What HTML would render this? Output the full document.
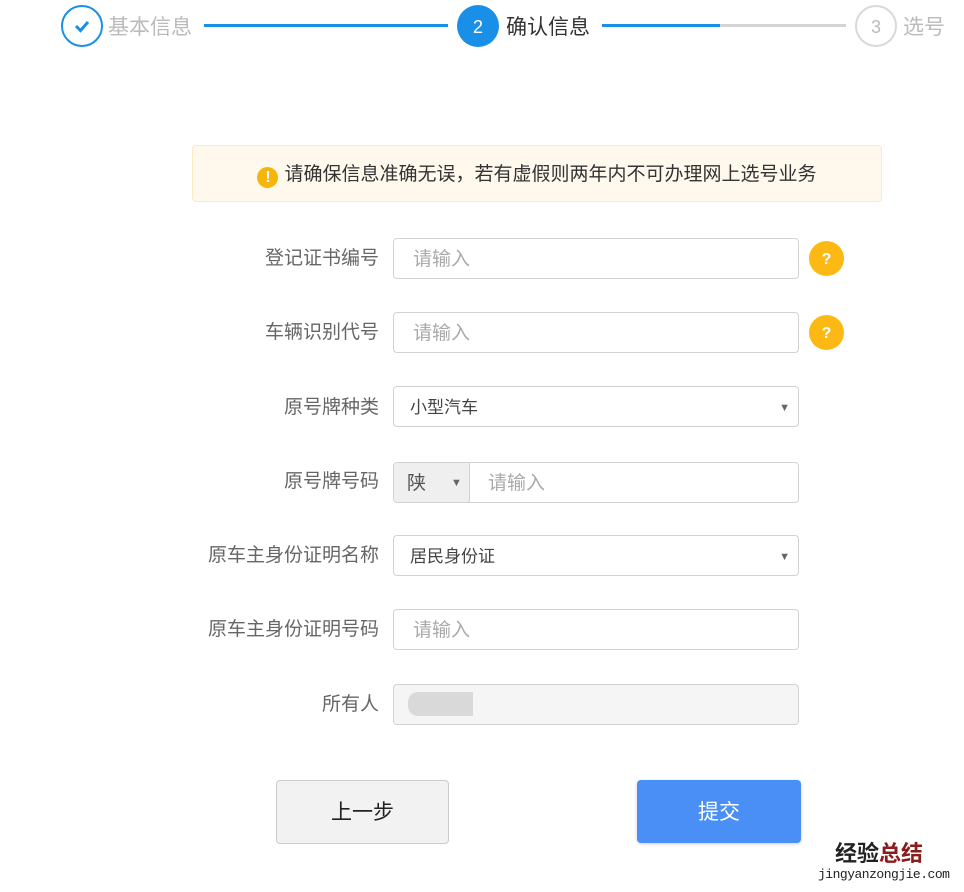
<!DOCTYPE html>
<html><head><meta charset="utf-8"><style>
*{box-sizing:border-box;margin:0;padding:0}
body{width:964px;height:892px;background:#fff;font-family:"Liberation Sans","Noto Sans CJK SC",sans-serif;position:relative;overflow:hidden}
.a{position:absolute}
.circ{position:absolute;width:42px;height:42px;border-radius:50%;text-align:center;line-height:38px;font-size:18px}
.st{position:absolute;top:15px;font-size:21px;line-height:26px}
.lab{position:absolute;right:585px;font-size:19px;color:#666;line-height:24px;white-space:nowrap}
.inp{position:absolute;left:393px;width:406px;height:41px;border:1px solid #d2d2d2;border-radius:4px;font-size:19px;line-height:42px;padding-left:19px;color:#aaa}
.arr{position:absolute;right:8px;top:0;font-size:11px;color:#666}
.q{position:absolute;left:809px;width:35px;height:35px;border-radius:50%;background:#fcb813;color:#fff;text-align:center;line-height:37px;font-size:16px;font-weight:bold}
</style></head><body>
<div class="circ" style="left:61px;top:5px;border:2px solid #1a8fe8;"><svg width="20" height="20" viewBox="0 0 20 20" style="margin-top:9px"><path d="M4 10 L8.5 14.5 L16 6" stroke="#1a8fe8" stroke-width="3" fill="none"/></svg></div>
<div class="st" style="left:108px;color:#bbb">基本信息</div>
<div class="a" style="left:204px;top:24px;width:244px;height:3px;background:#1a8fe8"></div>
<div class="circ" style="left:457px;top:5px;background:#1a8fe8;color:#fff;line-height:44px">2</div>
<div class="st" style="left:506px;color:#333">确认信息</div>
<div class="a" style="left:602px;top:24px;width:118px;height:3px;background:#1a8fe8"></div>
<div class="a" style="left:720px;top:24px;width:126px;height:3px;background:#d6d3d3"></div>
<div class="circ" style="left:855px;top:5px;border:2px solid #ddd8d8;color:#bbb;line-height:40px">3</div>
<div class="st" style="left:903px;color:#bbb">选号</div>

<div class="a" style="left:192px;top:145px;width:690px;height:57px;background:#fef9ec;border:1px solid #faebc4;border-radius:4px;text-align:center;font-size:19px;line-height:57px;color:#333">
<span style="display:inline-block;width:21px;height:21px;border-radius:50%;background:#f5b50c;color:#fff;font-weight:bold;font-size:16px;line-height:21px;vertical-align:-2px;margin-right:6px">!</span>请确保信息准确无误，若有虚假则两年内不可办理网上选号业务</div>

<div class="lab" style="top:247px">登记证书编号</div>
<div class="inp" style="top:238px">请输入</div>
<div class="q" style="top:241px">?</div>
<div class="lab" style="top:321px">车辆识别代号</div>
<div class="inp" style="top:312px">请输入</div>
<div class="q" style="top:315px">?</div>
<div class="lab" style="top:396px">原号牌种类</div>
<div class="inp" style="top:386px;color:#444;font-size:17px;padding-left:16px">小型汽车<span class="arr">▼</span></div>
<div class="lab" style="top:470px">原号牌号码</div>
<div class="inp" style="top:462px;padding-left:94px">请输入</div>
<div class="a" style="left:394px;top:463px;width:76px;height:39px;background:#efefef;border-right:1px solid #d2d2d2;border-radius:4px 0 0 4px;font-size:19px;line-height:41px;padding-left:13px;color:#555">陕<span style="position:absolute;left:57px;font-size:11px;color:#666">▼</span></div>
<div class="lab" style="top:544px">原车主身份证明名称</div>
<div class="inp" style="top:535px;color:#444;font-size:17px;padding-left:16px">居民身份证<span class="arr">▼</span></div>
<div class="lab" style="top:618px">原车主身份证明号码</div>
<div class="inp" style="top:609px">请输入</div>
<div class="lab" style="top:693px">所有人</div>
<div class="inp" style="top:684px;background:#f5f5f5"></div>
<div class="a" style="left:408px;top:692px;width:65px;height:24px;background:#d2d2d2;border-radius:10px 0 0 10px;opacity:.8"></div>

<div class="a" style="left:276px;top:780px;width:173px;height:64px;background:#f2f2f2;border:1px solid #ccc;border-radius:4px;text-align:center;line-height:64px;font-size:21px;color:#222">上一步</div>
<div class="a" style="left:637px;top:780px;width:164px;height:63px;background:#4a8ff5;border-radius:4px;text-align:center;line-height:65px;font-size:21px;color:#fff;box-shadow:0 1px 3px rgba(0,0,0,.2)">提交</div>
<div class="a" style="left:835px;top:841px;font-size:22px;font-weight:bold;color:#222;line-height:26px">经验<span style="color:#8b1c1c">总结</span></div>
<div class="a" style="left:818px;top:867px;font-size:13px;color:#222;line-height:16px;font-family:'Liberation Mono',monospace;letter-spacing:-0.5px">jingyanzongjie.com</div>
</body></html>
